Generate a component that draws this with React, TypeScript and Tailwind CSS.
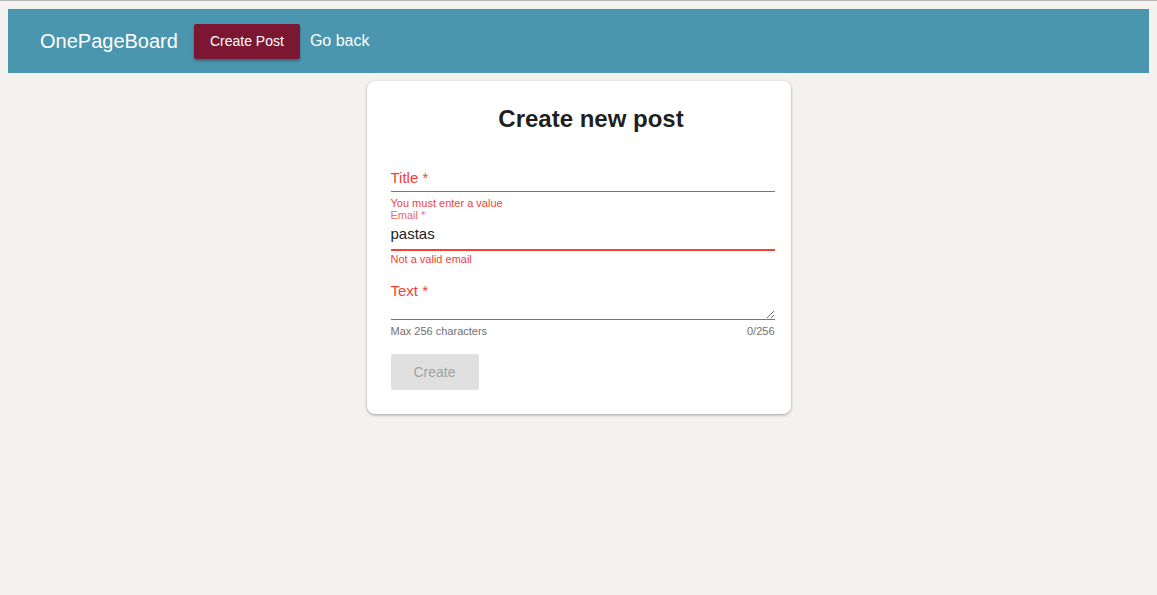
import { useState } from "react"

export default function App() {
  const [email, setEmail] = useState("pastas")
  const [title, setTitle] = useState("")
  const [text, setText] = useState("")

  return (
    <div className="min-h-[595px] bg-[#f3f2ee] border-t border-[#b3b3b3] px-2 pt-2 font-['Liberation_Sans',Arial,sans-serif]">
      {/* Top bar */}
      <header className="flex h-16 items-center bg-[#4a96ae] pl-8">
        <span className="text-[20px] text-white">OnePageBoard</span>
        <button className="ml-4 h-[35px] w-[106px] rounded-[2px] bg-[#7b1733] text-[14px] text-white shadow-[0_2px_3px_rgba(0,0,0,0.3)]">
          Create Post
        </button>
        <button className="ml-[10px] text-[16px] text-white">Go back</button>
      </header>

      {/* Form card */}
      <div className="mx-auto mt-2 w-[424px] rounded-lg bg-white pl-6 pr-4 pt-6 pb-6 shadow-[0_1px_3px_rgba(0,0,0,0.35)]">
        <h2 className="pl-[17px] text-center text-[24px] font-bold leading-[28px] text-[#1f1f1f]">Create new post</h2>

        {/* Title */}
        <label className="mt-9 block h-[23px] border-b border-[#f44336]">
          <input
            value={title}
            onChange={(e) => setTitle(e.target.value)}
            placeholder="Title *"
            className="block w-full bg-transparent text-[15px] leading-[18px] text-[#222] outline-none placeholder:text-[#f44336]"
          />
        </label>
        <p className="mt-[5px] text-[11px] leading-[12px] text-[#f44336]">You must enter a value</p>

        {/* Email */}
        <p className="text-[11px] leading-[12px] text-[#f06a66]">Email *</p>
        <div className="mt-[4px] h-[26px] border-b-2 border-[#f44336]">
          <input
            value={email}
            onChange={(e) => setEmail(e.target.value)}
            className="block w-full bg-transparent text-[15px] leading-[18px] text-[#222] outline-none"
          />
        </div>
        <p className="mt-[2px] text-[11px] leading-[12px] text-[#f44336]">Not a valid email</p>

        {/* Text */}
        <div className="mt-[17px] border-b border-[#f44336]">
          <p className="text-[15px] leading-[18px] text-[#f44336]">Text *</p>
          <textarea
            value={text}
            onChange={(e) => setText(e.target.value)}
            rows={1}
            className="block h-[19px] w-full resize-y bg-transparent text-[15px] leading-[18px] outline-none"
          />
        </div>
        <div className="mt-[5px] flex justify-between text-[11px] leading-[12px] text-[#6f7070]">
          <span>Max 256 characters</span>
          <span>0/256</span>
        </div>

        <button
          disabled
          className="mt-[17px] h-9 w-[88px] rounded-[2px] bg-[#e0e0e0] text-[14px] text-[#a2a2a2]"
        >
          Create
        </button>
      </div>
    </div>
  )
}
